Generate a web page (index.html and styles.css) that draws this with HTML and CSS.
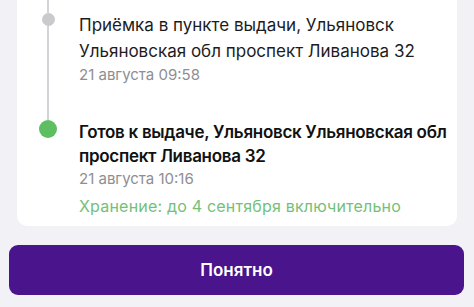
FILE: index.html
```html
<!DOCTYPE html>
<html lang="ru">
<head>
<meta charset="utf-8">
<link rel="stylesheet" href="styles.css">
</head>
<body>
<div class="card">
  <div class="item first">
    <div class="rail">
      <span class="seg top"></span>
      <span class="dot grey"></span>
      <span class="seg grow"></span>
    </div>
    <div class="content">
      <div class="title">Приёмка в пункте выдачи, Ульяновск Ульяновская обл проспект Ливанова 32</div>
      <div class="date">21 августа 09:58</div>
    </div>
  </div>
  <div class="item last">
    <div class="rail">
      <span class="dot green"></span>
    </div>
    <div class="content">
      <div class="title bold">Готов к выдаче, Ульяновск Ульяновская обл проспект Ливанова 32</div>
      <div class="date">21 августа 10:16</div>
      <div class="store">Хранение: до 4 сентября включительно</div>
    </div>
  </div>
</div>
<button class="btn">Понятно</button>
</body>
</html>
```
FILE: styles.css
```css
html, body {
  margin: 0;
  padding: 0;
  background: #f2f2f6;
  font-family: Inter, "Noto Sans", sans-serif;
  -webkit-font-smoothing: antialiased;
}
body {
  width: 474px;
  height: 307px;
  overflow: hidden;
}
.card {
  margin: 0 17px;
  background: #ffffff;
  border-radius: 0 0 10px 10px;
  padding-bottom: 9px;
}
.item {
  display: grid;
  grid-template-columns: 62px 1fr;
}
.item.first {
  padding-bottom: 34px;
}
.rail {
  display: flex;
  flex-direction: column;
  align-items: center;
  margin-bottom: -34px;
}
.item.last .rail { margin-bottom: 0; }
.seg {
  width: 2px;
  background: #d4d4d8;
}
.seg.top { height: 13px; flex: none; }
.seg.grow { flex: 1; }
.dot {
  border-radius: 50%;
  flex: none;
}
.dot.grey {
  width: 13px;
  height: 13px;
  background: #cacace;
}
.dot.green {
  width: 18px;
  height: 18px;
  background: #5dbe62;
}
.content {
  padding-top: 13px;
}
.item.last .content { padding-top: 0; }
.title {
  font-size: 17px;
  line-height: 25.5px;
  color: #1c1c1e;
}
.title.bold {
  font-weight: 600;
  color: #111;
  line-height: 24px;
  letter-spacing: -0.3px;
}
.date {
  font-size: 15px;
  line-height: 22px;
  color: #8e8e93;
}
.store {
  margin-top: 5px;
  font-size: 16px;
  letter-spacing: 0.2px;
  line-height: 22px;
  color: #74c078;
}
.btn {
  display: block;
  margin: 19px 0 0 9px;
  width: 455px;
  height: 50px;
  border: none;
  border-radius: 9px;
  background: #4a148c;
  color: #ffffff;
  font-family: Inter, "Noto Sans", sans-serif;
  font-size: 17px;
  font-weight: 600;
  padding: 0;
}
```
